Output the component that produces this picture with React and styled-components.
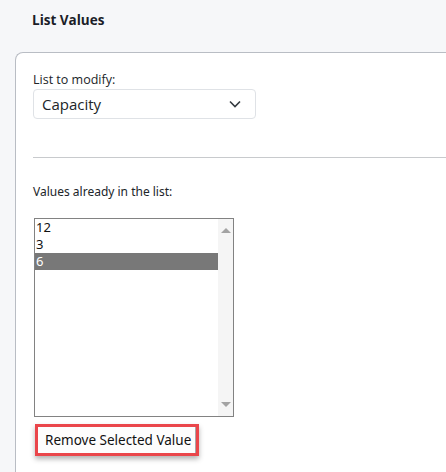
import React from "react";
import styled, { createGlobalStyle } from "styled-components";

const GlobalStyle = createGlobalStyle`
  html, body {
    margin: 0;
    padding: 0;
    background: #f6f7f9;
    overflow: hidden;
  }
  body {
    font-family: "Open Sans", "Noto Sans", Arial, sans-serif;
    color: #212529;
  }
`;

const Page = styled.div`
  display: flex;
  flex-direction: column;
  height: 472px;
`;

const Title = styled.h2`
  margin: 0;
  padding: 11px 0 0 32px;
  height: 52px;
  box-sizing: border-box;
  font-size: 13.5px;
  font-weight: 700;
  line-height: 18px;
  color: #1b1d28;
`;

const Card = styled.section`
  flex: 1;
  margin-left: 15px;
  background: #fff;
  border-top: 1px solid #b9bdc4;
  border-left: 1px solid #b9bdc4;
  border-top-left-radius: 8px;
  padding: 19px 0 0 17px;
  display: flex;
  flex-direction: column;
`;

const Label = styled.label`
  font-size: 12.5px;
  line-height: 16px;
  color: #212529;
`;

const Select = styled.div`
  margin-top: 1px;
  width: 223px;
  height: 30px;
  box-sizing: border-box;
  border: 1px solid #dfe2e6;
  border-radius: 4px;
  display: flex;
  align-items: center;
  justify-content: space-between;
  padding: 0 14px 0 8px;
  font-size: 15px;
  color: #212529;
`;

const Divider = styled.hr`
  margin: 38px 0 0 0;
  border: none;
  border-top: 1px solid #c8cacd;
`;

const SubLabel = styled(Label)`
  margin-top: 26px;
  font-family: "Noto Sans", "Open Sans", sans-serif;
  font-size: 12px;
`;

const ListBox = styled.div`
  margin: 18px 0 0 1px;
  width: 200px;
  height: 199px;
  box-sizing: border-box;
  border: 1px solid #828282;
  display: flex;
`;

const Options = styled.ul`
  list-style: none;
  margin: 0;
  padding: 0;
  flex: 1;
`;

const Option = styled.li`
  height: 17px;
  line-height: 17px;
  padding-left: 1px;
  font-family: "Noto Sans", "Open Sans", sans-serif;
  font-size: 13px;
  background: ${(p) => (p.$selected ? "#787878" : "transparent")};
  color: ${(p) => (p.$selected ? "#fff" : "#111")};
`;

const ScrollTrack = styled.div`
  width: 15px;
  background: #f5f5f5;
  display: flex;
  flex-direction: column;
  justify-content: space-between;
  align-items: center;
  padding: 9px 0 9px;
  box-sizing: border-box;
`;

const Arrow = styled.span`
  width: 0;
  height: 0;
  border-left: 5px solid transparent;
  border-right: 5px solid transparent;
  ${(p) =>
    p.$down
      ? "border-top: 5px solid #a3a3a3;"
      : "border-bottom: 5px solid #a3a3a3;"}
`;

const Highlight = styled.div`
  margin: 7px 0 0 2px;
  width: 164px;
  height: 32px;
  box-sizing: border-box;
  border: 3px solid #ea464b;
  box-shadow: 0 3px 5px rgba(0, 0, 0, 0.3);
  display: flex;
`;

const Button = styled.button`
  flex: 1;
  margin: 0;
  border: none;
  border-right: 1px solid #a8a8a8;
  background: #fdfdfd;
  font-family: "Noto Sans", "Open Sans", sans-serif;
  font-size: 13.5px;
  color: #111;
  text-align: left;
  padding: 0 0 0 7px;
`;

const Chevron = () => (
  <svg width="12" height="8" viewBox="0 0 12 8" fill="none">
    <path d="M1 1.5 L6 6.5 L11 1.5" stroke="#343a40" strokeWidth="1.6" />
  </svg>
);

const values = ["12", "3", "6"];

export default function App() {
  return (
    <Page>
      <GlobalStyle />
      <Title>List Values</Title>
      <Card>
        <Label>List to modify:</Label>
        <Select>
          <span>Capacity</span>
          <Chevron />
        </Select>
        <Divider />
        <SubLabel>Values already in the list:</SubLabel>
        <ListBox>
          <Options>
            {values.map((v) => (
              <Option key={v} $selected={v === "6"}>
                {v}
              </Option>
            ))}
          </Options>
          <ScrollTrack>
            <Arrow />
            <Arrow $down />
          </ScrollTrack>
        </ListBox>
        <Highlight>
          <Button>Remove Selected Value</Button>
        </Highlight>
      </Card>
    </Page>
  );
}
